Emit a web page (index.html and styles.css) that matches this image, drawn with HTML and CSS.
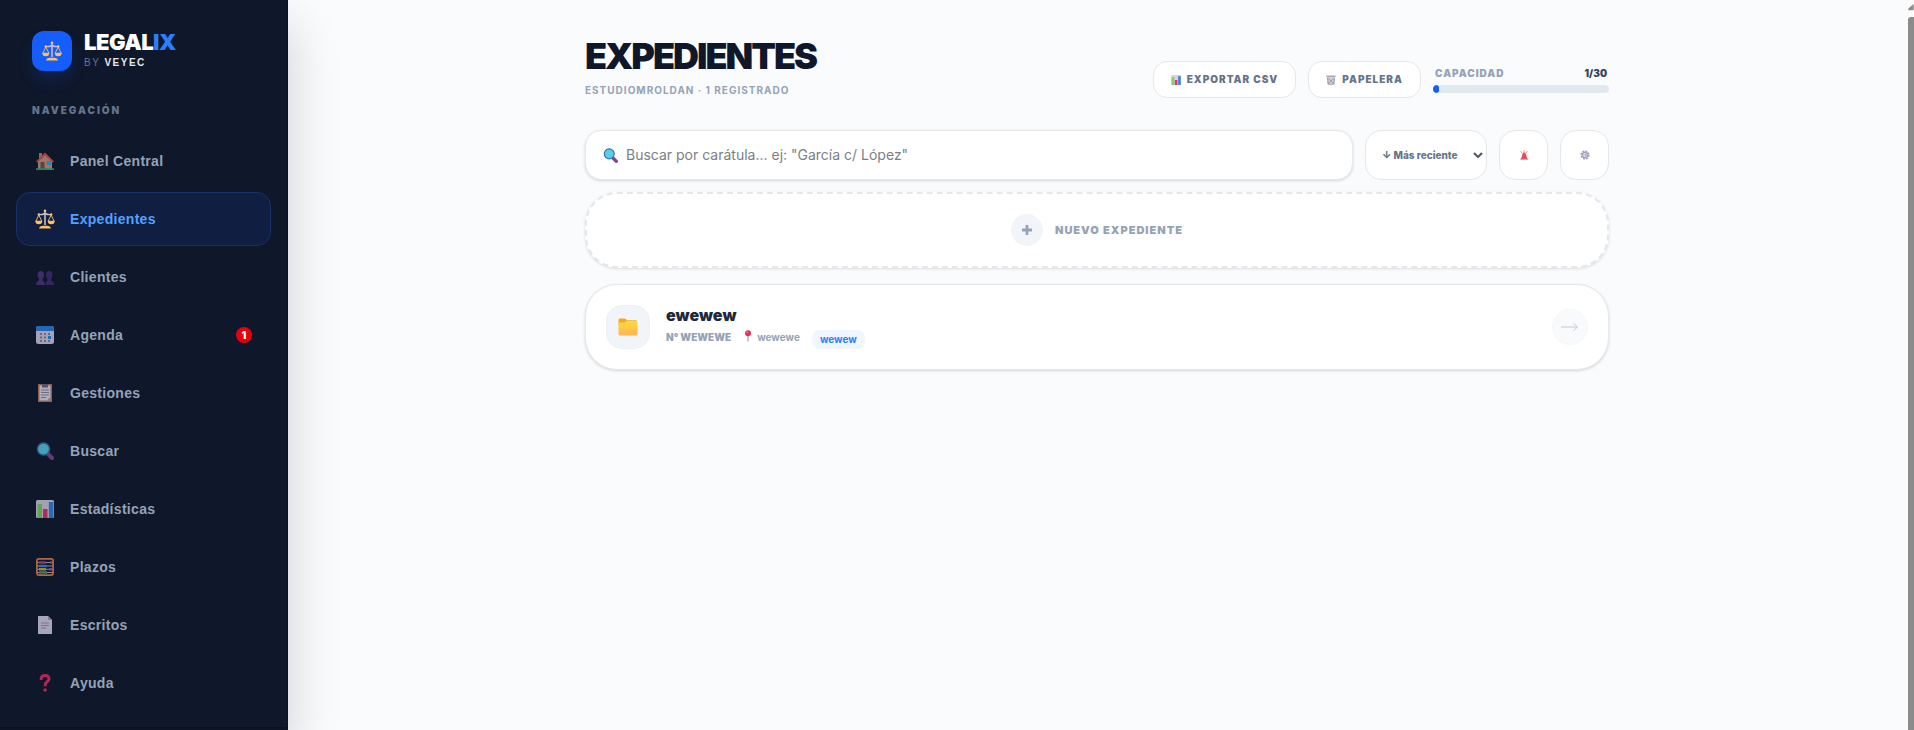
FILE: index.html
```html
<!DOCTYPE html>
<html lang="es">
<head>
<meta charset="utf-8">
<meta name="viewport" content="width=device-width, initial-scale=1">
<title>Legalix – Expedientes</title>
<link rel="stylesheet" href="styles.css">
</head>
<body>
<svg class="sprite" aria-hidden="true">
  <defs>
    <linearGradient id="folder-fill" x1="0" y1="0" x2="0" y2="1"><stop offset="0" stop-color="#ffd93b"/><stop offset="1" stop-color="#ffb554"/></linearGradient>
  </defs>
  <symbol id="i-scale" viewBox="0 0 20 20">
    <path d="M10 1v15" stroke="#c9bfd6" stroke-width="1.600" fill="none"/>
    <path d="M3.500 5.500Q7 6 10 4.500Q13 6 16.500 5.500" stroke="#c9bfd6" stroke-width="1.400" fill="none"/>
    <path d="M3.800 6 1 12M3.800 6l3 6M16.200 6l-3 6M16.200 6l2.800 6" stroke="#e0b878" stroke-width="1" fill="none"/>
    <circle cx="10" cy="1.800" r="1.300" fill="#f6c667"/><circle cx="3.800" cy="5.500" r="1.200" fill="#f6c667"/><circle cx="16.200" cy="5.500" r="1.200" fill="#f6c667"/>
    <path d="M.3 11.700h7a3.500 3.500 0 0 1-7 0zM12.700 11.700h7a3.500 3.500 0 0 1-7 0zM4 19.500q.5-2.500 4-2.800h4q3.500 .3 4 2.800z" fill="#fbc15e"/>
  </symbol>
  <symbol id="i-house" viewBox="0 0 18 18">
    <path d="M3 1h3v5H3z" fill="#b9826a"/><path d="M2 9l7-7 7 7v8H2z" fill="#c9987f"/>
    <path d="M0 9.500 9 .5l9 9-1.500 1L9 3.500 1.500 10.500z" fill="#e0524f"/>
    <path d="M4.500 10h4v7h-4z" fill="#7d5148"/><path d="M11 9h4v4h-4z" fill="#38a9e0"/><path d="M0 16.300h18V18H0z" fill="#2fae72"/>
  </symbol>
  <symbol id="i-people" viewBox="0 0 18 18">
    <path d="M1.500 6.500Q1.500 3 4.800 3T8 6.500Q8 9.500 6.500 11v1.500q2.500 1 2.500 4.500H0q0-3.500 3-4.500V11Q1.500 9.500 1.500 6.500z" fill="#4f357f"/>
    <path d="M10 6.500Q10 3 13.200 3t3.300 3.500q0 3-1.500 4.500v1.500q3 1 3 4.500H9.500q0-3.500 2-4.500V11Q10 9.500 10 6.500z" fill="#432c73"/>
  </symbol>
  <symbol id="i-calendar" viewBox="0 0 18 18">
    <rect width="18" height="18" rx="2.500" fill="#d9d0e8"/><path d="M0 5V2.500A2.500 2.500 0 0 1 2.500 0h13A2.500 2.500 0 0 1 18 2.500V5z" fill="#2a84e6"/>
    <path d="M4 7h2v2H4zm4 0h2v2H8zm4 0h2v2h-2zM4 10.500h2v2H4zm4 0h2v2H8zM4 14h2v2H4zm4 0h2v2H8z" fill="#8a83a3"/><path d="M12 10h3v3h-3z" fill="#208be8"/><path d="M12 14h2v2h-2z" fill="#8a83a3"/>
  </symbol>
  <symbol id="i-clipboard" viewBox="0 0 18 18">
    <path d="M2 0h14v18H2z" fill="#b97b60"/><path d="M3.500 1.500h11v15h-11z" fill="#e6dfee"/><path d="M6 0h6v3.500H6z" fill="#6e6880"/>
    <path d="M5 6h8M5 8.500h8M5 11h8M5 13.500h5" stroke="#8f88a1" fill="none"/><path d="M11 16.500h3.500V13z" fill="#d29464"/>
  </symbol>
  <symbol id="i-search" viewBox="0 0 18 18">
    <path d="m12 12 4 4" stroke="#84468b" stroke-width="4" stroke-linecap="round"/><circle cx="7.500" cy="7" r="6" fill="#55cdeb" stroke="#3576a9" stroke-width="1.400"/>
  </symbol>
  <symbol id="i-chart" viewBox="0 0 18 18">
    <rect width="18" height="18" rx="1.500" fill="#d8d0e3"/><path d="M1.500 4h4.500v14H1.500z" fill="#7dd35f"/><path d="M7 9h4.500v9H7z" fill="#e8316b"/><path d="M12.800 2H17.500v16h-4.700z" fill="#3488dc"/>
  </symbol>
  <symbol id="i-abacus" viewBox="0 0 18 18">
    <path d="M1 4.500h16M1 8h16M1 11.300h16M1 14.500h16" stroke="#b8b2cc" stroke-width="1"/>
    <path d="M3 3.300h7v2.400H3z" fill="#b8439c"/><path d="M3 6.800h8v2.400H3z" fill="#378ddd"/><path d="M3 10h7v2.500H3z" fill="#e5a333"/><path d="M3 13.200h8v2.500H3z" fill="#35a882"/>
    <path d="M14 3.300h2v2.400h-2zM13 10h3v2.500h-3z" fill="#9d54c4"/><rect x=".9" y=".9" width="16.200" height="16.200" rx="2" fill="none" stroke="#f08045" stroke-width="1.700"/>
  </symbol>
  <symbol id="i-page" viewBox="0 0 18 18">
    <path d="M2 0h10l4 4v14H2z" fill="#dcd5ea"/><path d="M12 0v4h4z" fill="#a69db9"/><path d="M5 7h8M5 9.500h8M5 12h5.500" stroke="#9a91ad" fill="none"/>
  </symbol>
  <symbol id="i-question" viewBox="0 0 18 18">
    <path d="M5.200 6V4.500q0-3 3.900-3t3.900 3.200q0 2-2.100 3.300-1.800 1.200-1.800 4.200" fill="none" stroke="#ed2b61" stroke-width="3"/><circle cx="9.100" cy="16" r="1.800" fill="#ed2b61"/>
  </symbol>
  <symbol id="i-bin" viewBox="0 0 12 12">
    <path d="M.5.500h11v2H11L10 11.500H2L1 2.500H.5z" fill="#d5d1dc"/><path d="M.5 1.500h11M2 3.500 2.600 11M10 3.500 9.400 11M3 4l6 6M9 4l-6 6M2.500 11h7" stroke="#908c9c" stroke-width="1" fill="none"/>
  </symbol>
  <symbol id="i-siren" viewBox="0 0 12 12">
    <path d="M4.800 3h2.700L10.200 11H2.300z" fill="#f8415f"/><path d="M1.500 10.300h9.500v1.200H1.500z" fill="#e0708a"/><path d="M6 .5v2M2 1.500l1.500 2M10 1.500 8.500 3.500" stroke="#fa8a60" stroke-width="1.200"/>
  </symbol>
  <symbol id="i-gear" viewBox="0 0 12 12">
    <circle cx="6" cy="6" r="4.700" fill="none" stroke="#a59bb8" stroke-width="1.600" stroke-dasharray="2.200 1.490"/><circle cx="6" cy="6" r="3.200" fill="#e6e0ef" stroke="#aaa0bd" stroke-width="1.800"/><circle cx="6.500" cy="6" r="1" fill="#8e84a4"/>
  </symbol>
  <symbol id="i-folder" viewBox="0 0 20 18">
    <path d="M.5 2A1.500 1.500 0 0 1 2 .5h5L9 2.300h9.500V7H.5z" fill="#f2a81f"/><path d="M.5 4.500h6L9 3h9a1.500 1.500 0 0 1 1.500 1.500V16a1.500 1.500 0 0 1-1.500 1.500H2A1.500 1.500 0 0 1 .5 16z" fill="url(#folder-fill)"/>
  </symbol>
  <symbol id="i-pin" viewBox="0 0 10 12">
    <path d="M5 5v6.500" stroke="#9088a0"/><circle cx="5" cy="3.300" r="3" fill="#e92c63"/><circle cx="4" cy="2.300" r=".8" fill="#ff91a9"/>
  </symbol>
</svg>

<div class="app">
  <aside class="sidebar">
    <div class="brand">
      <span class="brand-mark"><svg class="icon-20"><use href="#i-scale"/></svg></span>
      <div>
        <div class="brand-name">LEGAL<span>IX</span></div>
        <div class="brand-by">BY <b>VEYEC</b></div>
      </div>
    </div>
    <div class="nav-title">NAVEGACIÓN</div>
    <nav class="nav">
      <a class="nav-item" href="#panel"><svg><use href="#i-house"/></svg><span>Panel Central</span></a>
      <a class="nav-item active" href="#expedientes" aria-current="page"><svg><use href="#i-scale"/></svg><span>Expedientes</span></a>
      <a class="nav-item" href="#clientes"><svg><use href="#i-people"/></svg><span>Clientes</span></a>
      <a class="nav-item" href="#agenda"><svg><use href="#i-calendar"/></svg><span>Agenda</span><b class="badge">1</b></a>
      <a class="nav-item" href="#gestiones"><svg><use href="#i-clipboard"/></svg><span>Gestiones</span></a>
      <a class="nav-item" href="#buscar"><svg><use href="#i-search"/></svg><span>Buscar</span></a>
      <a class="nav-item" href="#estadisticas"><svg><use href="#i-chart"/></svg><span>Estadísticas</span></a>
      <a class="nav-item" href="#plazos"><svg><use href="#i-abacus"/></svg><span>Plazos</span></a>
      <a class="nav-item" href="#escritos"><svg><use href="#i-page"/></svg><span>Escritos</span></a>
      <a class="nav-item" href="#ayuda"><svg><use href="#i-question"/></svg><span>Ayuda</span></a>
    </nav>
    <div class="sidebar-foot"></div>
  </aside>

  <main class="main">
    <div class="content">
      <header class="head">
        <div>
          <h1>EXPEDIENTES</h1>
          <p class="subtitle">ESTUDIOMROLDAN · 1 REGISTRADO</p>
        </div>
        <div class="head-actions">
          <button class="pill" type="button"><svg><use href="#i-chart"/></svg>EXPORTAR CSV</button>
          <button class="pill" type="button"><svg><use href="#i-bin"/></svg>PAPELERA</button>
          <div class="capacity">
            <div class="capacity-row"><span>CAPACIDAD</span><b>1/30</b></div>
            <div class="capacity-bar"><div class="capacity-fill" style="width:3.33%"></div></div>
          </div>
        </div>
      </header>

      <div class="filters">
        <label class="search">
          <svg><use href="#i-search"/></svg>
          <input type="text" aria-label="Buscar por carátula" placeholder="Buscar por carátula... ej: &quot;García c/ López&quot;">
        </label>
        <div class="sort">
          <select aria-label="Ordenar"><option>↓ Más reciente</option></select>
          <svg viewBox="0 0 10 6"><path d="m1 1 4 4 4-4" fill="none" stroke="#4b5563" stroke-width="2"/></svg>
        </div>
        <button class="square" type="button" aria-label="Urgentes"><svg><use href="#i-siren"/></svg></button>
        <button class="square" type="button" aria-label="Ajustes"><svg><use href="#i-gear"/></svg></button>
      </div>

      <button class="new" type="button">
        <span class="plus"><svg viewBox="0 0 12 12"><path d="M6 1v10M1 6h10" stroke="#94a3b8" stroke-width="2.800"/></svg></span>
        NUEVO EXPEDIENTE
      </button>

      <article class="case">
        <span class="case-icon"><svg><use href="#i-folder"/></svg></span>
        <div class="case-body">
          <h2>ewewew</h2>
          <div class="case-meta">
            <span class="case-number">N° WEWEWE</span>
            <span class="case-place"><svg><use href="#i-pin"/></svg>wewewe</span>
            <span class="tag">wewew</span>
          </div>
        </div>
        <a class="case-open" href="#expediente" aria-label="Abrir expediente"><svg viewBox="0 0 18 10"><path d="M0 5h16M12.500 1.500 16.500 5l-4 3.500" fill="none" stroke="#c3cad4"/></svg></a>
      </article>
    </div>
  </main>
  <div class="scroll" aria-hidden="true"><svg viewBox="0 0 6 8"><path d="M6 0v7H0V5z" fill="#8b8b8b"/></svg><div class="thumb"></div></div>
</div>
</body>
</html>
```
FILE: styles.css
```css
* { box-sizing: border-box; }
body { margin: 0; background: #fafbfd; color: #0f172a; font-family: Inter, sans-serif; }
button, input, select { font: inherit; color: inherit; }
h1, h2, p { margin: 0; }
svg { display: block; flex: none; }
.sprite { position: absolute; width: 0; height: 0; }

.app { display: flex; height: 100vh; overflow: hidden; }

/* Sidebar */
.sidebar { display: flex; flex-direction: column; flex: none; width: 288px; border-right: 1px solid #0b1122; background: #0f172a; box-shadow: 0 24px 48px rgba(0, 0, 0, .18); z-index: 1; }
.brand { display: flex; gap: 12px; padding: 31px 32px 0; }
.brand-mark { display: grid; place-items: center; width: 40px; height: 40px; border-radius: 12px; background: #155dfc; box-shadow: 0 10px 15px rgba(21, 93, 252, .15); }
.icon-20 { width: 20px; height: 20px; }
.brand-name { color: #fff; font-size: 22px; line-height: 22px; font-weight: 900; letter-spacing: -0.5px; }
.brand-name span { color: #2b7fff; }
.brand-by { color: #64748b; font: 10px/14px "Liberation Sans", sans-serif; letter-spacing: 1.5px; margin-top: 3px; }
.brand-by b { color: #e2e8f0; }
.nav-title { padding: 32px 32px 0; color: #64748b; font-size: 10px; line-height: 15px; font-weight: 900; letter-spacing: 2px; }
.nav { display: flex; flex: 1; flex-direction: column; gap: 4px; min-height: 0; padding: 16px 16px 0; }
.nav-item { display: flex; flex: none; align-items: center; gap: 16px; height: 54px; padding: 0 18px 0 19px; border: 1px solid transparent; border-radius: 14px; color: #94a3b8; font: bold 14px/20px "Liberation Sans", sans-serif; letter-spacing: .3px; text-decoration: none; }
.nav-item svg { width: 18px; height: 18px; opacity: .75; }
.nav-item.active { border-color: #1b3165; background: #101e41; color: #51a2ff; }
.nav-item.active svg { width: 20px; height: 20px; margin: 0 -1px; opacity: 1; }
.badge { display: grid; place-items: center; width: 16px; height: 16px; margin-left: auto; border-radius: 8px; background: #e7000b; color: #fff; font: 900 10px/16px Inter, sans-serif; letter-spacing: 0; }
.sidebar-foot { height: 3px; flex: none; border-top: 1px solid #0b1020; background: #0d1424; }

/* Content */
.main { flex: 1; min-width: 0; padding: 36px 50px 0 48px; }
.content { max-width: 1024px; margin: 0 auto; }
.head { display: flex; align-items: flex-end; justify-content: space-between; padding-bottom: 32px; }
h1 { font-size: 36px; line-height: 40px; font-weight: 900; letter-spacing: -2px; }
.subtitle { padding-top: 7px; color: #94a3b8; font-size: 10px; line-height: 15px; font-weight: 700; letter-spacing: 1px; }
.head-actions { display: flex; align-items: center; gap: 12px; }
.pill { display: flex; align-items: center; gap: 6px; height: 37px; padding: 0 17px; border: 1px solid #e5e7eb; border-radius: 14px; background: #fff; color: #64748b; font-size: 10px; line-height: 15px; font-weight: 900; letter-spacing: 1px; }
.pill svg { width: 10px; height: 10px; }
.capacity { width: 176px; }
.capacity-row { display: flex; justify-content: space-between; padding: 0 2px 4px; font-size: 10px; line-height: 15px; font-weight: 900; color: #94a3b8; letter-spacing: 1px; }
.capacity-row b { color: #334155; font-weight: 900; letter-spacing: 0; }
.capacity-bar { height: 8px; overflow: hidden; border-radius: 4px; background: #e2e8f0; }
.capacity-fill { height: 8px; border-radius: 4px; background: #155dfc; }

.filters { display: flex; gap: 12px; margin-bottom: 12px; }
.search { display: flex; flex: 1; align-items: center; gap: 8px; height: 50px; padding: 0 17px; border: 1px solid #e5e7eb; border-radius: 16px; background: #fff; box-shadow: 0 1px 3px rgba(0, 0, 0, .15); }
.search svg { width: 15px; height: 15px; }
.search input { flex: 1; min-width: 0; padding: 0; border: 0; outline: 0; background: none; font-size: 14px; line-height: 20px; }
.search input::placeholder { color: #7c7f84; opacity: 1; }
.sort { display: grid; align-items: center; width: 122px; border: 1px solid #e5e7eb; border-radius: 16px; background: #fff; }
.sort > * { grid-area: 1 / 1; }
.sort select { width: 100%; height: 48px; padding: 0 20px 0 16px; border: 0; border-radius: 16px; background: none; appearance: none; color: #64748b; font-size: 10px; font-weight: 800; }
.sort svg { justify-self: end; width: 10px; height: 6px; margin-right: 3px; pointer-events: none; }
.square { display: grid; place-items: center; width: 49px; height: 50px; padding: 0; border: 1px solid #e5e7eb; border-radius: 16px; background: #fff; }
.square svg { width: 10px; height: 10px; }

.new { display: flex; align-items: center; justify-content: center; gap: 12px; width: 100%; height: 76px; margin-bottom: 16px; border: 2px dashed #e5e7eb; border-radius: 32px; background: #fff; box-shadow: 0 1px 3px rgba(0, 0, 0, .12); color: #94a3b8; font-size: 11px; font-weight: 900; letter-spacing: 1px; }
.plus { display: grid; place-items: center; width: 32px; height: 32px; border-radius: 16px; background: #f1f5f9; }
.plus svg { width: 12px; height: 12px; }

.case { display: flex; align-items: center; gap: 16px; height: 86px; padding: 0 20px; border: 1px solid #e5e7eb; border-radius: 32px; background: #fff; box-shadow: 0 1px 3px rgba(0, 0, 0, .15); }
.case-icon { display: grid; place-items: center; width: 44px; height: 44px; border: 1px solid #edf1f5; border-radius: 16px; background: #f1f5f9; }
.case-icon svg { width: 20px; height: 18px; }
.case-body { display: grid; flex: 1; gap: 5px; min-width: 0; }
h2 { color: #1e293b; font-size: 16px; line-height: 20px; font-weight: 900; }
.case-meta { display: flex; gap: 12px; color: #94a3b8; font-size: 10px; line-height: 15px; }
.case-number { font-weight: 900; }
.case-place { display: flex; gap: 4px; font-weight: 700; }
.case-place svg { width: 10px; height: 12px; }
.tag { padding: 2px 8px; border-radius: 8px; background: #eff6ff; color: #2b7fff; font-weight: 700; }
.case-open { display: grid; place-items: center; width: 36px; height: 36px; border: 1px solid #f6f8fa; border-radius: 18px; background: #f9fafc; }
.case-open svg { width: 18px; height: 10px; }

/* Scroll rail */
.scroll { display: flex; flex: none; flex-direction: column; gap: 6px; width: 6px; padding-top: 4px; background: #fcfcfc; }
.scroll svg { width: 6px; height: 7px; }
.thumb { flex: 1; border-radius: 3px 0 0 0; background: #8b8b8b; }
```
